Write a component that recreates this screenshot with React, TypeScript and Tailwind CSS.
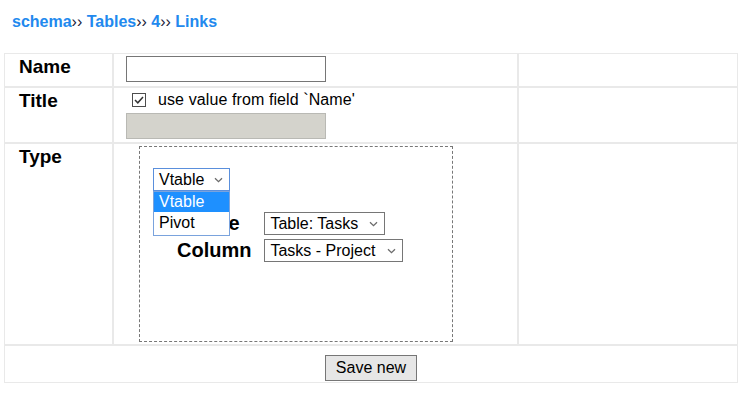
import React from "react";

const cell = "border border-[#e9e9e9]";
const label = "pl-[14px] pt-[2px] text-[19px] leading-[21px] font-bold";

function Chevron() {
    return (
        <svg width="9" height="6" viewBox="0 0 9 6" className="shrink-0">
            <path d="M1 1.2 L4.5 4.6 L8 1.2" fill="none" stroke="#6b6b6b" strokeWidth="1.3" />
        </svg>
    );
}

function FakeSelect({ value, width, focused }: { value: string; width: string; focused?: boolean }) {
    return (
        <div
            className={`${width} h-[23px] flex items-center justify-between pl-[5px] pr-[6px] bg-white text-[16px] leading-none text-black border ${
                focused ? "border-[#5a8fdc]" : "border-[#767676]"
            }`}
        >
            <span>{value}</span>
            <Chevron />
        </div>
    );
}

export default function App() {
    return (
        <div className="w-[749px] h-[409px] bg-white font-['Liberation_Sans',Arial,sans-serif] text-black">
            {/* breadcrumb */}
            <div className="pt-[13px] pl-[12px] text-[16px] leading-[18px]">
                <a className="font-bold text-[#2289ee]">schema</a>
                <span className="text-[#1c1c3a]">›› </span>
                <a className="font-bold text-[#2289ee]">Tables</a>
                <span className="text-[#1c1c3a]">›› </span>
                <a className="font-bold text-[#2289ee]">4</a>
                <span className="text-[#1c1c3a]">›› </span>
                <a className="font-bold text-[#2289ee]">Links</a>
            </div>

            <div className="ml-[4px] mt-[22px] w-[734px] grid grid-cols-[109px_405px_220px] grid-rows-[34px_56px_202px_38px]">
                {/* Name */}
                <div className={`${cell} ${label}`}>Name</div>
                <div className={`${cell} pl-[12px] pt-[2px]`}>
                    <div className="w-[200px] h-[26px] border border-[#767676] bg-white" />
                </div>
                <div className={cell} />

                {/* Title */}
                <div className={`${cell} ${label}`}>Title</div>
                <div className={`${cell} pl-[12px] pt-[2px] flex flex-col`}>
                    <div className="h-[20px] flex items-center pl-[6px]">
                        <div className="w-[14px] h-[14px] border border-[#4d4d4d] flex items-center justify-center bg-white">
                            <svg width="12" height="12" viewBox="0 0 12 12">
                                <path d="M2 6 L4.8 8.8 L10 3" fill="none" stroke="#333" strokeWidth="1.5" />
                            </svg>
                        </div>
                        <span className="ml-[12px] text-[16px] leading-[18px] tracking-[0.1px]">use value from field `Name'</span>
                    </div>
                    <div className="mt-[3px] w-[200px] h-[26px] border border-[#b9b9b4] bg-[#d4d3cc]" />
                </div>
                <div className={cell} />

                {/* Type */}
                <div className={`${cell} ${label}`}>Type</div>
                <div className={`${cell} pl-[25px] pt-[2px]`}>
                    <div className="w-[314px] h-[196px] border border-dashed border-[#777]">
                        <div className="pl-[13px] pt-[21px]">
                            <div className="relative w-[77px]">
                                <FakeSelect value="Vtable" width="w-[77px]" focused />
                                <div className="absolute left-0 top-[23px] z-10 w-[77px] h-[45px] border border-[#7aa3dd] bg-white text-[16px] leading-[20px]">
                                    <div className="h-[20px] pl-[5px] bg-[#1e90ff] text-white">Vtable</div>
                                    <div className="h-[22px] pl-[5px] pt-[1px]">Pivot</div>
                                </div>
                            </div>
                        </div>
                        <div className="mt-[21px] pl-[37px] grid grid-cols-[auto_auto] justify-start gap-x-[13px] gap-y-[4px] items-center">
                            <div className="text-center text-[20px] font-bold leading-[23px]">Table</div>
                            <FakeSelect value="Table: Tasks" width="w-[121px]" />
                            <div className="text-center text-[20px] font-bold leading-[23px]">Column</div>
                            <FakeSelect value="Tasks - Project" width="w-[139px]" />
                        </div>
                    </div>
                </div>
                <div className={cell} />

                {/* Save */}
                <div className={`${cell} col-span-3 flex justify-center pt-[9px]`}>
                    <button className="w-[92px] h-[26px] border border-[#767676] bg-[#e6e6e6] text-[16px] leading-none text-black">
                        Save new
                    </button>
                </div>
            </div>
        </div>
    );
}
